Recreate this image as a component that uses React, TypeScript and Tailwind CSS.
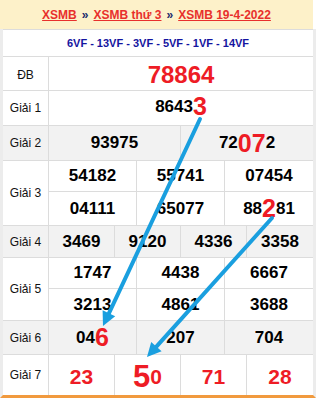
import React from "react";

const num = "font-['Liberation_Sans',Arial,sans-serif] font-bold text-[17px] text-black";
const red = "text-[#ee1c25]";

function Label({ children, grey }: { children: React.ReactNode; grey?: boolean }) {
  return (
    <div className={`flex items-center justify-center border-r border-[#dcdcdc] text-[12px] text-[#111] ${grey ? "bg-[#f2f2f2]" : ""}`}>
      {children}
    </div>
  );
}

function Cells({ items, cls, last }: { items: React.ReactNode[]; cls: string; last?: boolean }) {
  return (
    <div className={`grid ${cls} ${last ? "" : "border-b border-[#dcdcdc]"}`}>
      {items.map((it, i) => (
        <div
          key={i}
          className={`flex items-center justify-center ${num} ${i < items.length - 1 ? "border-r border-[#dcdcdc]" : ""}`}
        >
          {it}
        </div>
      ))}
    </div>
  );
}

export default function App() {
  return (
    <div className="relative w-[316px] h-[398px] bg-white font-['Liberation_Sans',Arial,sans-serif] overflow-hidden">
      {/* tiêu đề */}
      <div className="w-[313px] h-[29px] bg-[#fdf1c9] flex items-center justify-center gap-[5px] text-[12px] font-bold">
        <a className="text-[#e8302c] underline">XSMB</a>
        <span className="text-[#1a2a6c]">»</span>
        <a className="text-[#e8302c] underline">XSMB thứ 3</a>
        <span className="text-[#1a2a6c]">»</span>
        <a className="text-[#e8302c] underline">XSMB 19-4-2022</a>
      </div>

      <div className="w-[316px] border-l-[3px] border-r-[3px] border-[#ececec] border-b-[3px] border-b-[#f19a3e]">
        <div className="h-[28px] border-t border-b border-[#dcdcdc] flex items-center justify-center text-[11px] font-bold text-[#1414a0]">
          6VF - 13VF - 3VF - 5VF - 1VF - 14VF
        </div>

        {/* ĐB */}
        <div className="grid grid-cols-[46px_1fr] h-[34px] border-b border-[#dcdcdc]">
          <Label>ĐB</Label>
          <div className="flex items-center justify-center font-bold text-[24px] text-[#ee1c25]">78864</div>
        </div>

        {/* Giải 1 */}
        <div className="grid grid-cols-[46px_1fr] h-[35px] border-b border-[#dcdcdc]">
          <Label>Giải 1</Label>
          <div className={`flex items-end justify-center pb-[6px] ${num}`}>
            8643<span className={`${red} text-[25px] leading-[25px]`}>3</span>
          </div>
        </div>

        {/* Giải 2 */}
        <div className="grid grid-cols-[46px_1fr] h-[35px] border-b border-[#dcdcdc] bg-[#f2f2f2]">
          <Label grey>Giải 2</Label>
          <Cells
            last
            cls="grid-cols-2"
            items={[
              "93975",
              <span key="b" className="flex items-end">
                72<span className={`${red} text-[25px] leading-[25px]`}>07</span>2
              </span>,
            ]}
          />
        </div>

        {/* Giải 3 */}
        <div className="grid grid-cols-[46px_1fr] border-b border-[#dcdcdc]">
          <Label>Giải 3</Label>
          <div className="grid grid-rows-[31px_33px]">
            <Cells cls="grid-cols-3" items={["54182", "55741", "07454"]} />
            <Cells
              last
              cls="grid-cols-3"
              items={[
                "04111",
                "65077",
                <span key="c" className="flex items-end">
                  88<span className={`${red} text-[25px] leading-[25px]`}>2</span>81
                </span>,
              ]}
            />
          </div>
        </div>

        {/* Giải 4 */}
        <div className="grid grid-cols-[46px_1fr] h-[32px] border-b border-[#dcdcdc] bg-[#f2f2f2]">
          <Label grey>Giải 4</Label>
          <Cells last cls="grid-cols-4" items={["3469", "9120", "4336", "3358"]} />
        </div>

        {/* Giải 5 */}
        <div className="grid grid-cols-[46px_1fr] border-b border-[#dcdcdc]">
          <Label>Giải 5</Label>
          <div className="grid grid-rows-[31px_31px]">
            <Cells cls="grid-cols-3" items={["1747", "4438", "6667"]} />
            <Cells last cls="grid-cols-3" items={["3213", "4861", "3688"]} />
          </div>
        </div>

        {/* Giải 6 */}
        <div className="grid grid-cols-[46px_1fr] h-[34px] border-b border-[#dcdcdc] bg-[#f2f2f2]">
          <Label grey>Giải 6</Label>
          <Cells
            last
            cls="grid-cols-3"
            items={[
              <span key="a" className="flex items-end">
                04<span className={`${red} text-[25px] leading-[25px]`}>6</span>
              </span>,
              "207",
              "704",
            ]}
          />
        </div>

        {/* Giải 7 */}
        <div className="grid grid-cols-[46px_1fr] h-[40px]">
          <Label>Giải 7</Label>
          <div className="grid grid-cols-4">
            {[
              <span key="0">23</span>,
              <span key="1" className="flex items-end">
                <span className="text-[31px] leading-[30px]">5</span>
                <span>0</span>
              </span>,
              <span key="2">71</span>,
              <span key="3">28</span>,
            ].map((it, i) => (
              <div
                key={i}
                className={`flex items-center justify-center font-bold text-[21px] text-[#ee1c25] pt-[3px] ${i < 3 ? "border-r border-[#dcdcdc]" : ""}`}
              >
                {it}
              </div>
            ))}
          </div>
        </div>
      </div>

      {/* mũi tên */}
      <svg className="absolute inset-0 pointer-events-none" width="316" height="398" viewBox="0 0 316 398">
        <line x1="200" y1="119" x2="108.9" y2="313.3" stroke="#1a9fdf" strokeWidth="4" strokeLinecap="round" />
        <polygon points="103,326 115.2,316.3 102.6,310.3" fill="#1a9fdf" />
        <line x1="272" y1="218" x2="156.4" y2="346.6" stroke="#1a9fdf" strokeWidth="4" strokeLinecap="round" />
        <polygon points="147,357 161.6,351.3 151.2,341.9" fill="#1a9fdf" />
      </svg>
    </div>
  );
}
